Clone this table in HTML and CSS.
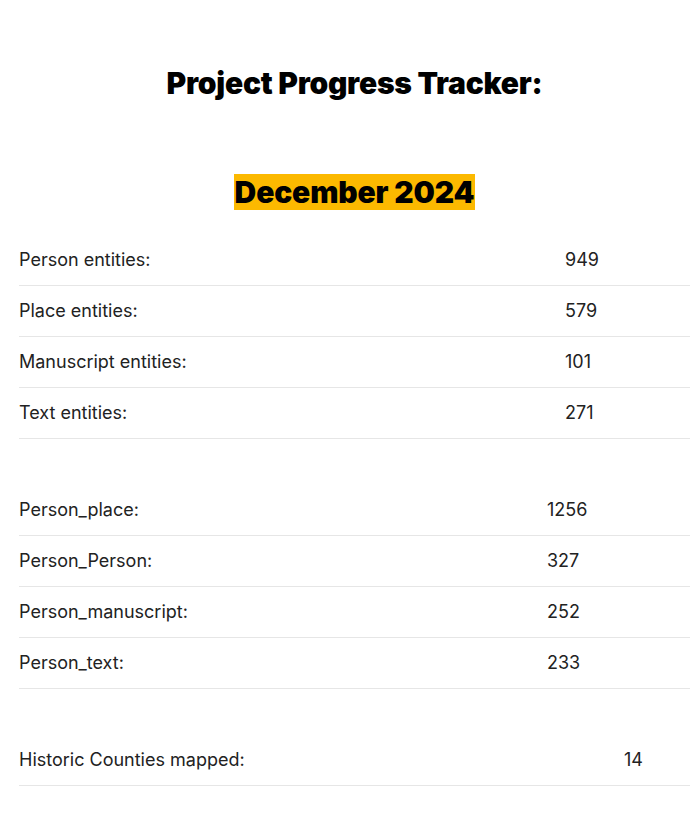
FILE: index.html
```html
<!DOCTYPE html>
<html lang="en">
<head>
<meta charset="utf-8">
<title>Project Progress Tracker</title>
<link rel="stylesheet" href="styles.css">
</head>
<body>
<main class="page">
  <h2 class="title">Project Progress Tracker:</h2>
  <h2 class="month"><mark class="hl">December 2024</mark></h2>

  <table class="stats stats-a">
    <tbody>
      <tr><td class="label">Person entities:</td><td class="val">949</td></tr>
      <tr><td class="label">Place entities:</td><td class="val">579</td></tr>
      <tr><td class="label">Manuscript entities:</td><td class="val">101</td></tr>
      <tr><td class="label">Text entities:</td><td class="val">271</td></tr>
    </tbody>
  </table>

  <table class="stats stats-b">
    <tbody>
      <tr><td class="label">Person_place:</td><td class="val">1256</td></tr>
      <tr><td class="label">Person_Person:</td><td class="val">327</td></tr>
      <tr><td class="label">Person_manuscript:</td><td class="val">252</td></tr>
      <tr><td class="label">Person_text:</td><td class="val">233</td></tr>
    </tbody>
  </table>

  <table class="stats stats-c">
    <tbody>
      <tr><td class="label">Historic Counties mapped:</td><td class="val">14</td></tr>
    </tbody>
  </table>
</main>
</body>
</html>
```

FILE: styles.css
```css
html, body {
  margin: 0;
  padding: 0;
  background: #ffffff;
}

body {
  font-family: Inter, "Liberation Sans", sans-serif;
  color: #222222;
}

.page {
  width: 671px;
  padding: 0 0 0 19px;
  box-sizing: content-box;
}

.title {
  margin: 0;
  padding-top: 64px;
  height: 38px;
  line-height: 38px;
  text-align: center;
  font-size: 30px;
  font-weight: 900;
  letter-spacing: -0.25px;
  color: #000000;
}

.month {
  margin: 72px 0 0;
  text-align: center;
  font-size: 30px;
  font-weight: 900;
  line-height: 36px;
  height: 36px;
  letter-spacing: -0.15px;
  color: #000000;
}

.hl {
  background: #fcb900;
  color: #000000;
  padding: 0 1px;
}

.stats {
  width: 671px;
  border-collapse: collapse;
  table-layout: fixed;
  font-size: 18px;
}

.stats td {
  padding: 0 0 1px;
  height: 49px;
  border-bottom: 1px solid #e6e6e6;
  vertical-align: middle;
  white-space: nowrap;
}

.stats-a { margin-top: 25px; }
.stats-b { margin-top: 46px; }
.stats-c { margin-top: 46px; }

.stats-a .label { width: 546px; }
.stats-b .label { width: 528px; }
.stats-c .label { width: 605px; }
```
